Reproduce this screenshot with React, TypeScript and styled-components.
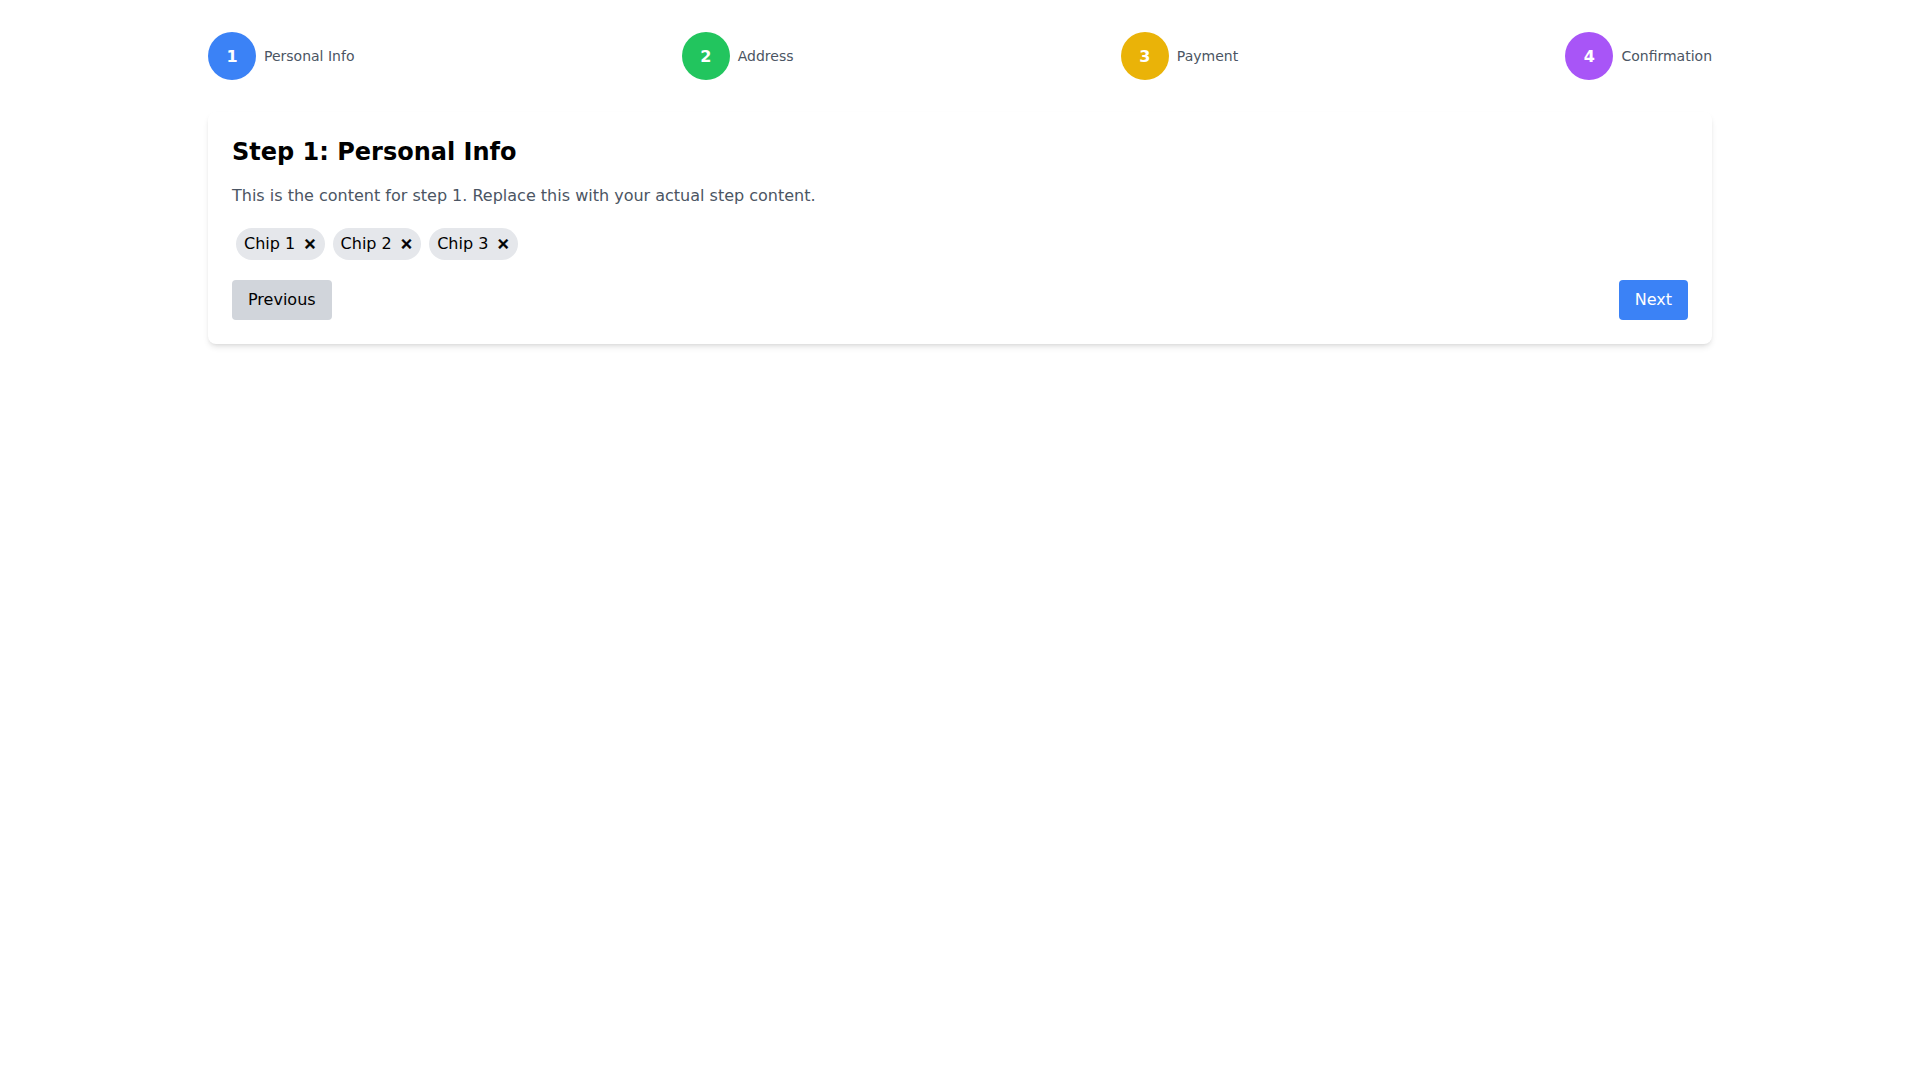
import styled, { createGlobalStyle } from "styled-components";

const GlobalStyle = createGlobalStyle`
  * {
    box-sizing: border-box;
  }
  body {
    margin: 0;
    background: #ffffff;
    font-family: "DejaVu Sans", "Liberation Sans", sans-serif;
    color: #000000;
  }
`;

const Page = styled.div`
  max-width: 1536px;
  margin: 0 auto;
  padding: 32px 16px;
`;

const Stepper = styled.div`
  display: flex;
  justify-content: space-between;
  align-items: center;
  margin-bottom: 32px;
`;

const Step = styled.div`
  display: flex;
  align-items: center;
  gap: 8px;
`;

const Circle = styled.div<{ $color: string }>`
  width: 48px;
  height: 48px;
  border-radius: 50%;
  background: ${(p) => p.$color};
  color: #ffffff;
  font-weight: 700;
  font-size: 16px;
  display: flex;
  align-items: center;
  justify-content: center;
`;

const StepLabel = styled.span`
  font-size: 14px;
  line-height: 20px;
  color: #4b5563;
`;

const Card = styled.div`
  background: #ffffff;
  border-radius: 8px;
  padding: 24px;
  box-shadow: 0 4px 6px -1px rgba(0, 0, 0, 0.1), 0 2px 4px -2px rgba(0, 0, 0, 0.1);
`;

const Title = styled.h2`
  margin: 0 0 16px;
  font-size: 24px;
  line-height: 32px;
  font-weight: 700;
`;

const Text = styled.p`
  margin: 0 0 16px;
  font-size: 16px;
  line-height: 24px;
  color: #4b5563;
`;

const Chips = styled.div`
  display: flex;
  flex-wrap: wrap;
  margin-bottom: 16px;
`;

const Chip = styled.div`
  display: inline-flex;
  align-items: center;
  margin: 4px;
  padding: 4px 8px;
  border-radius: 9999px;
  background: #e5e7eb;
  font-size: 16px;
  line-height: 24px;
`;

const ChipRemove = styled.button`
  margin-left: 8px;
  padding: 0;
  border: none;
  background: none;
  font-family: inherit;
  font-size: 16px;
  line-height: 24px;
  font-weight: 700;
  color: #000000;
  -webkit-text-stroke: 0.4px #000000;
  cursor: pointer;
`;

const Actions = styled.div`
  display: flex;
  justify-content: space-between;
`;

const Button = styled.button<{ $primary?: boolean }>`
  padding: 8px 16px;
  border: none;
  border-radius: 4px;
  font-family: inherit;
  font-size: 16px;
  line-height: 24px;
  background: ${(p) => (p.$primary ? "#3b82f6" : "#d1d5db")};
  color: ${(p) => (p.$primary ? "#ffffff" : "#000000")};
  cursor: pointer;
`;

const steps = [
  { label: "Personal Info", color: "#3b82f6" },
  { label: "Address", color: "#22c55e" },
  { label: "Payment", color: "#eab308" },
  { label: "Confirmation", color: "#a855f7" },
];

const chips = ["Chip 1", "Chip 2", "Chip 3"];

export default function App() {
  return (
    <>
      <GlobalStyle />
      <Page>
        <Stepper>
          {steps.map((s, i) => (
            <Step key={s.label}>
              <Circle $color={s.color}>{i + 1}</Circle>
              <StepLabel>{s.label}</StepLabel>
            </Step>
          ))}
        </Stepper>
        <Card>
          <Title>Step 1: Personal Info</Title>
          <Text>
            This is the content for step 1. Replace this with your actual step
            content.
          </Text>
          <Chips>
            {chips.map((c) => (
              <Chip key={c}>
                {c}
                <ChipRemove>×</ChipRemove>
              </Chip>
            ))}
          </Chips>
          <Actions>
            <Button>Previous</Button>
            <Button $primary>Next</Button>
          </Actions>
        </Card>
      </Page>
    </>
  );
}
